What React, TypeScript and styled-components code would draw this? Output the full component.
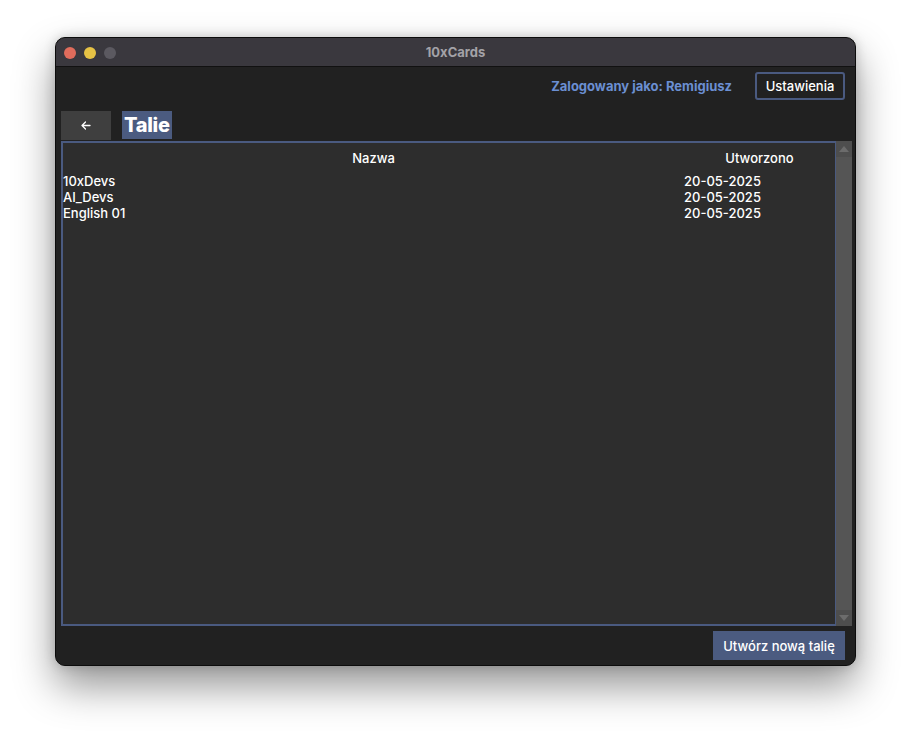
import React from "react";
import styled, { createGlobalStyle } from "styled-components";

const Global = createGlobalStyle`
  html, body { margin: 0; padding: 0; background: #ffffff; }
  body { font-family: Inter, "Noto Sans", "Liberation Sans", sans-serif; -webkit-font-smoothing: antialiased; }
`;

const Page = styled.div`
  width: 912px;
  height: 740px;
  padding: 37px 0 0 55px;
  box-sizing: border-box;
`;

const Window = styled.div`
  width: 801px;
  height: 629px;
  box-sizing: border-box;
  border: 1px solid #0c0c0c;
  border-radius: 10px;
  overflow: hidden;
  display: flex;
  flex-direction: column;
  background: #212121;
  box-shadow: 0 20px 40px rgba(0, 0, 0, 0.42), 0 0 12px rgba(0, 0, 0, 0.18);
`;

const TitleBar = styled.div`
  position: relative;
  height: 28px;
  flex: none;
  background: #3a383e;
  border-bottom: 1px solid #111;
  display: flex;
  align-items: center;
  justify-content: center;
`;

const Lights = styled.div`
  position: absolute;
  left: 8px;
  top: 9px;
  display: flex;
  gap: 8px;
`;

const Light = styled.span<{ $c: string }>`
  width: 12px;
  height: 12px;
  border-radius: 50%;
  background: ${(p) => p.$c};
`;

const Title = styled.span`
  font-size: 13px;
  font-weight: 700;
  color: #a3a2a7;
`;

const Content = styled.div`
  flex: 1;
  display: flex;
  flex-direction: column;
  background: #212121;
`;

const TopBar = styled.div`
  display: flex;
  justify-content: flex-end;
  align-items: center;
  gap: 23px;
  padding: 5px 10px 0 0;
  height: 28px;
`;

const UserLabel = styled.span`
  color: #6b8fd2;
  font-size: 13px;
  font-weight: 700;
`;

const OutlineButton = styled.button`
  height: 28px;
  width: 90px;
  box-sizing: border-box;
  background: transparent;
  border: 2px solid #4a5a80;
  border-radius: 3px;
  color: #ffffff;
  font-family: inherit;
  font-size: 13px;
  font-weight: 500;
  padding: 0;
`;

const HeaderRow = styled.div`
  display: flex;
  align-items: flex-start;
  gap: 11px;
  margin-top: 11px;
  padding-left: 5px;
  height: 29px;
`;

const BackButton = styled.button`
  width: 50px;
  height: 29px;
  border: none;
  background: #3f3f3f;
  display: flex;
  align-items: center;
  justify-content: center;
  padding: 0;
`;

const PageTitle = styled.h1`
  margin: 0;
  height: 28px;
  padding: 0 2px;
  background: #4b5b80;
  color: #ffffff;
  font-size: 20px;
  font-weight: 800;
  line-height: 29px;
  letter-spacing: -0.3px;
`;

const TableFrame = styled.div`
  display: flex;
  margin: 1px 3px 0 5px;
  height: 485px;
`;

const TableBox = styled.div`
  flex: 1;
  box-sizing: border-box;
  border: 2px solid #4a5a80;
  border-right-width: 1px;
  background: #2d2d2d;
  display: flex;
  flex-direction: column;
`;

const Grid = styled.div`
  display: grid;
  grid-template-columns: 621px 1fr;
  color: #ffffff;
  font-size: 13px;
  font-weight: 500;
`;

const HeadCell = styled.div`
  height: 30px;
  display: flex;
  align-items: center;
  justify-content: center;
`;

const Cell = styled.div`
  height: 16px;
  line-height: 16px;
  white-space: nowrap;
`;

const ScrollBar = styled.div`
  width: 16px;
  background: #555555;
  display: flex;
  flex-direction: column;
  justify-content: space-between;
`;

const ScrollBtn = styled.div`
  height: 16px;
  background: #4e4e4e;
  display: flex;
  align-items: center;
  justify-content: center;
`;

const BottomBar = styled.div`
  display: flex;
  justify-content: flex-end;
  padding: 5px 10px 0 0;
`;

const PrimaryButton = styled.button`
  height: 29px;
  width: 132px;
  border: none;
  background: #4b5b80;
  color: #ffffff;
  font-family: inherit;
  font-size: 13px;
  font-weight: 500;
  padding: 0;
`;

const decks = [
  { name: "10xDevs", created: "20-05-2025" },
  { name: "AI_Devs", created: "20-05-2025" },
  { name: "English 01", created: "20-05-2025" },
];

export default function App() {
  return (
    <Page>
      <Global />
      <Window>
        <TitleBar>
          <Lights>
            <Light $c="#e06c5c" />
            <Light $c="#e6c245" />
            <Light $c="#5b5960" />
          </Lights>
          <Title>10xCards</Title>
        </TitleBar>
        <Content>
          <TopBar>
            <UserLabel>Zalogowany jako: Remigiusz</UserLabel>
            <OutlineButton>Ustawienia</OutlineButton>
          </TopBar>
          <HeaderRow>
            <BackButton aria-label="Wstecz">
              <svg width="10" height="9" viewBox="0 0 10 9">
                <path d="M9 4.5H1.5M4.5 1L1 4.5L4.5 8" stroke="#fff" strokeWidth="1.3" fill="none" strokeLinecap="round" strokeLinejoin="round" />
              </svg>
            </BackButton>
            <PageTitle>Talie</PageTitle>
          </HeaderRow>
          <TableFrame>
            <TableBox>
              <Grid>
                <HeadCell>Nazwa</HeadCell>
                <HeadCell>Utworzono</HeadCell>
                {decks.map((d) => (
                  <React.Fragment key={d.name}>
                    <Cell>{d.name}</Cell>
                    <Cell>{d.created}</Cell>
                  </React.Fragment>
                ))}
              </Grid>
            </TableBox>
            <ScrollBar>
              <ScrollBtn>
                <svg width="10" height="6" viewBox="0 0 10 6">
                  <path d="M0 6L5 0L10 6Z" fill="#6c6c6c" />
                </svg>
              </ScrollBtn>
              <ScrollBtn>
                <svg width="10" height="6" viewBox="0 0 10 6">
                  <path d="M0 0L5 6L10 0Z" fill="#6c6c6c" />
                </svg>
              </ScrollBtn>
            </ScrollBar>
          </TableFrame>
          <BottomBar>
            <PrimaryButton>Utwórz nową talię</PrimaryButton>
          </BottomBar>
        </Content>
      </Window>
    </Page>
  );
}
